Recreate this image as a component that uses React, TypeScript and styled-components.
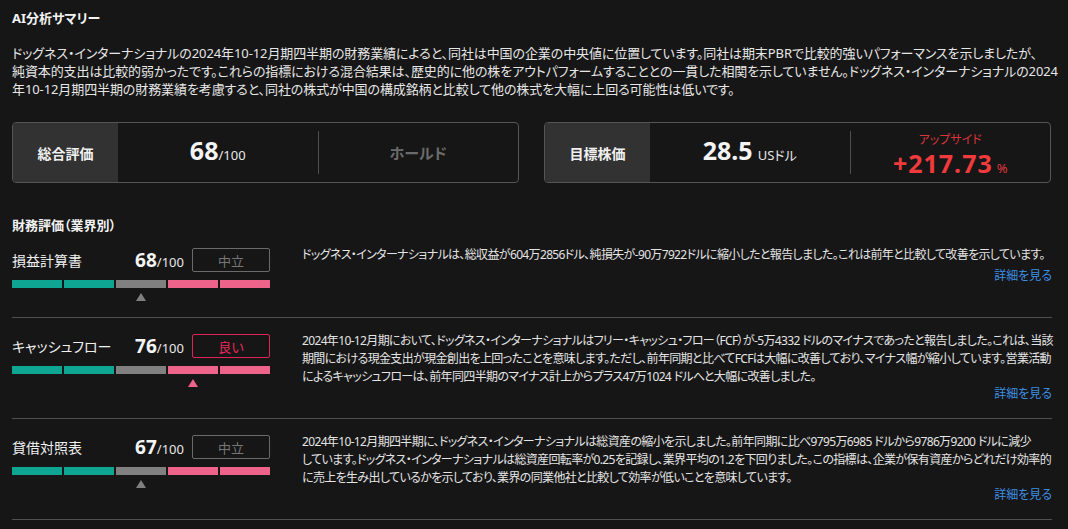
import styled, { createGlobalStyle } from 'styled-components'

const GlobalStyle = createGlobalStyle`
  html, body {
    margin: 0;
    background: #161616;
  }
  body {
    font-family: "Noto Sans", "Noto Sans CJK JP", sans-serif;
    color: #e8e8e8;
  }
`

const Page = styled.div`
  width: 1040px;
  padding: 9px 16px 0 12px;
  font-feature-settings: 'palt';
`

const SectionTitle = styled.h2<{ $gap?: number }>`
  margin: 0;
  font-size: 13px;
  line-height: 18px;
  font-weight: 700;
  color: #f2f2f2;
  margin-top: ${(p) => p.$gap ?? 0}px;
`

const Summary = styled.div`
  margin-top: 17px;
  font-size: 13px;
  line-height: 18px;
  letter-spacing: -0.1px;
  color: #e6e6e6;
`

const Line = styled.span`
  display: block;
  white-space: nowrap;
`

const CardRow = styled.div`
  margin-top: 24px;
  display: grid;
  grid-template-columns: 1fr 1fr;
  column-gap: 25px;
  width: 1039px;
`

const Card = styled.div`
  display: flex;
  height: 59px;
  border: 1px solid #555;
  border-radius: 4px;
  overflow: hidden;
`

const CardLabel = styled.div`
  width: 105px;
  flex-shrink: 0;
  background: #323232;
  display: flex;
  align-items: center;
  justify-content: center;
  font-size: 14px;
  font-weight: 700;
  color: #f0f0f0;
`

const CardCell = styled.div<{ $stacked?: boolean }>`
  flex: 1;
  display: flex;
  flex-direction: column;
  align-items: center;
  justify-content: ${(p) => (p.$stacked ? 'flex-start' : 'center')};
  padding-top: ${(p) => (p.$stacked ? '9px' : '0')};
`

const CardDivider = styled.div`
  width: 1px;
  background: #4e4e4e;
  margin: 8px 0;
`

const BigValue = styled.span<{ $color?: string }>`
  font-size: 25px;
  font-weight: 700;
  line-height: 26px;
  color: ${(p) => p.$color ?? '#f4f4f4'};
  letter-spacing: ${(p) => (p.$color ? '1px' : '0')};
`

const Unit = styled.span<{ $color?: string; $gap?: number }>`
  font-size: 13px;
  font-weight: 400;
  letter-spacing: 0;
  margin-left: ${(p) => p.$gap ?? 0}px;
  color: ${(p) => p.$color ?? '#e8e8e8'};
`

const Verdict = styled.span`
  font-size: 15px;
  font-weight: 700;
  color: #6b6b6b;
`

const UpsideLabel = styled.span`
  font-size: 12px;
  line-height: 16px;
  margin-bottom: 2px;
  color: #d8353b;
`

const MetricRow = styled.div<{ $first?: boolean }>`
  display: grid;
  grid-template-columns: 258px minmax(0, 1fr);
  column-gap: 32px;
  padding: ${(p) => (p.$first ? '12px' : '14px')} 0 16px;
  border-top: ${(p) => (p.$first ? 'none' : '1px solid #505050')};
  width: 1040px;
`

const LastRule = styled.div`
  width: 1040px;
  border-top: 1px solid #505050;
`

const MetricLeft = styled.div`
  padding-top: 2px;
  display: flex;
  flex-direction: column;
`

const MetricHead = styled.div`
  display: flex;
  align-items: center;
  height: 24px;
`

const MetricName = styled.span`
  flex: 1;
  font-size: 14px;
  color: #f0f0f0;
`

const Score = styled.span`
  font-size: 19px;
  font-weight: 700;
  color: #f4f4f4;
  margin-right: 8px;
  small {
    font-size: 13px;
    font-weight: 400;
    color: #e8e8e8;
  }
`

const Badge = styled.span<{ $tone: 'neutral' | 'good' }>`
  width: 78px;
  height: 24px;
  box-sizing: border-box;
  display: flex;
  align-items: center;
  justify-content: center;
  border: 1px solid ${(p) => (p.$tone === 'good' ? '#e0245a' : '#6a6a6a')};
  border-radius: 2px;
  font-size: 13px;
  color: ${(p) => (p.$tone === 'good' ? '#e8285e' : '#777')};
`

const Bars = styled.div`
  margin-top: 8px;
  display: grid;
  grid-template-columns: repeat(5, 50px);
  column-gap: 2px;
`

const Segment = styled.div<{ $color: string }>`
  height: 8px;
  background: ${(p) => p.$color};
`

const Marker = styled.div<{ $color: string }>`
  margin-top: 5px;
  height: 8px;
  display: flex;
  justify-content: center;
  &::after {
    content: '';
    border-left: 5px solid transparent;
    border-right: 5px solid transparent;
    border-bottom: 8px solid ${(p) => p.$color};
  }
`

const MetricRight = styled.div`
  display: flex;
  flex-direction: column;
  min-width: 0;
`

const Description = styled.div<{ $single?: boolean }>`
  font-size: 12px;
  line-height: 18px;
  letter-spacing: -0.65px;
  color: #e4e4e4;
  margin-bottom: ${(p) => (p.$single ? '4px' : '0')};
`

const DetailLink = styled.a`
  align-self: flex-end;
  font-size: 12px;
  line-height: 16px;
  color: #3d8fe2;
  text-decoration: none;
  cursor: pointer;
`

const segmentColors = ['#0ea593', '#0ea593', '#808080', '#ee6389', '#ee6389']

type Metric = {
  name: string
  score: number
  verdict: string
  tone: 'neutral' | 'good'
  position: number
  lines: string[]
}

const metrics: Metric[] = [
  {
    name: '損益計算書',
    score: 68,
    verdict: '中立',
    tone: 'neutral',
    position: 2,
    lines: [
      'ドッグネス・インターナショナルは、総収益が604万2856ドル、純損失が-90万7922ドルに縮小したと報告しました。これは前年と比較して改善を示しています。',
    ],
  },
  {
    name: 'キャッシュフロー',
    score: 76,
    verdict: '良い',
    tone: 'good',
    position: 3,
    lines: [
      '2024年10-12月期において、ドッグネス・インターナショナルはフリー・キャッシュ・フロー（FCF）が-5万4332 ドルのマイナスであったと報告しました。これは、当該',
      '期間における現金支出が現金創出を上回ったことを意味します。ただし、前年同期と比べてFCFは大幅に改善しており、マイナス幅が縮小しています。営業活動',
      'によるキャッシュフローは、前年同四半期のマイナス計上からプラス47万1024 ドルへと大幅に改善しました。',
    ],
  },
  {
    name: '貸借対照表',
    score: 67,
    verdict: '中立',
    tone: 'neutral',
    position: 2,
    lines: [
      '2024年10-12月期四半期に、ドッグネス・インターナショナルは総資産の縮小を示しました。前年同期に比べ9795万6985 ドルから9786万9200 ドルに減少',
      'しています。ドッグネス・インターナショナルは総資産回転率が0.25を記録し、業界平均の1.2を下回りました。この指標は、企業が保有資産からどれだけ効率的',
      'に売上を生み出しているかを示しており、業界の同業他社と比較して効率が低いことを意味しています。',
    ],
  },
]

const summaryLines = [
  'ドッグネス・インターナショナルの2024年10-12月期四半期の財務業績によると、同社は中国の企業の中央値に位置しています。同社は期末PBRで比較的強いパフォーマンスを示しましたが、',
  '純資本的支出は比較的弱かったです。これらの指標における混合結果は、歴史的に他の株をアウトパフォームすることとの一貫した相関を示していません。ドッグネス・インターナショナルの2024',
  '年10-12月期四半期の財務業績を考慮すると、同社の株式が中国の構成銘柄と比較して他の株式を大幅に上回る可能性は低いです。',
]

function App() {
  return (
    <Page>
      <GlobalStyle />
      <SectionTitle>AI分析サマリー</SectionTitle>
      <Summary>
        {summaryLines.map((l) => (
          <Line key={l}>{l}</Line>
        ))}
      </Summary>

      <CardRow>
        <Card>
          <CardLabel>総合評価</CardLabel>
          <CardCell>
            <BigValue>
              68<Unit>/100</Unit>
            </BigValue>
          </CardCell>
          <CardDivider />
          <CardCell>
            <Verdict>ホールド</Verdict>
          </CardCell>
        </Card>
        <Card>
          <CardLabel>目標株価</CardLabel>
          <CardCell>
            <BigValue>
              28.5<Unit $gap={5}>USドル</Unit>
            </BigValue>
          </CardCell>
          <CardDivider />
          <CardCell $stacked>
            <UpsideLabel>アップサイド</UpsideLabel>
            <BigValue $color="#f03a3c">
              +217.73<Unit $gap={4} $color="#e0363c">%</Unit>
            </BigValue>
          </CardCell>
        </Card>
      </CardRow>

      <SectionTitle $gap={33}>財務評価（業界別）</SectionTitle>
      {metrics.map((m, i) => (
        <MetricRow key={m.name} $first={i === 0}>
          <MetricLeft>
            <MetricHead>
              <MetricName>{m.name}</MetricName>
              <Score>
                {m.score}
                <small>/100</small>
              </Score>
              <Badge $tone={m.tone}>{m.verdict}</Badge>
            </MetricHead>
            <Bars>
              {segmentColors.map((c, j) => (
                <div key={j}>
                  <Segment $color={c} />
                  {j === m.position && <Marker $color={c} />}
                </div>
              ))}
            </Bars>
          </MetricLeft>
          <MetricRight>
            <Description $single={m.lines.length === 1}>
              {m.lines.map((l) => (
                <Line key={l}>{l}</Line>
              ))}
            </Description>
            <DetailLink>詳細を見る</DetailLink>
          </MetricRight>
        </MetricRow>
      ))}
      <LastRule />
    </Page>
  )
}

export default App
